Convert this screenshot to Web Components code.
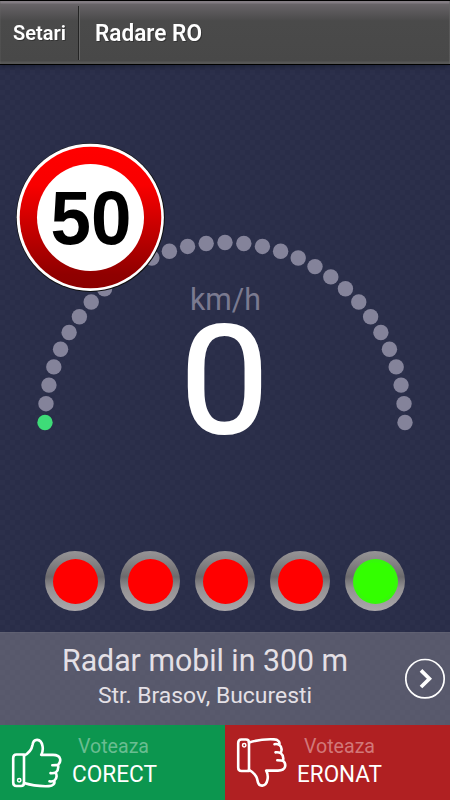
<!DOCTYPE html>
<html lang="ro"><head><meta charset="utf-8"><title>Radare RO</title>
<style>html,body{margin:0;background:#292d48}body{font-family:Roboto,"Liberation Sans",sans-serif;width:450px;height:800px;overflow:hidden}</style></head>
<body><radar-app></radar-app>
<script>
const define=(name,html)=>customElements.define(name,class extends HTMLElement{
  constructor(){super();this.attachShadow({mode:'open'});}
  connectedCallback(){const t=document.createElement('template');t.innerHTML=typeof html==='function'?html(this):html;this.shadowRoot.replaceChildren(t.content.cloneNode(true));}
});

define('fit-text',e=>`<style>:host{display:block;white-space:nowrap}svg{display:block;overflow:visible}</style>
<svg width="${e.getAttribute('w')}" height="${e.getAttribute('h')}"><text x="0" y="${e.getAttribute('h')}" textLength="${e.getAttribute('w')}" lengthAdjust="spacingAndGlyphs" fill="currentColor">${e.getAttribute('text')}</text></svg>`);

define('title-bar',`<style>
:host{display:flex;box-sizing:border-box;height:65px;border-top:1px solid #000;border-bottom:1px solid #000;background:linear-gradient(#827c82 0,#827c82 2px,#686468 3px,#625f62 6px,#4a4a4a 20px,#484848 60px,#565656 61px);color:#fff;font-weight:600;position:relative;z-index:1;box-shadow:0 1px 5px #0a0d1e88,inset 1px 0 #6664,inset -1px 0 #6668}
fit-text{filter:drop-shadow(1px 1px 0 #2228)}
.back{width:78px;box-sizing:border-box;padding:24px 0 0 13px;font-size:20.5px}
i{width:1px;height:54px;margin-top:5px;background:#242424;border-right:1px solid #666}
.title{padding:24px 0 0 15px;font-size:23px}
</style><div class="back"><fit-text text="Setari" w="53" h="15"></fit-text></div><i></i><div class="title"><fit-text text="Radare RO" w="107" h="16"></fit-text></div>`);

define('speed-sign',`<style>:host{display:block;width:150px;height:150px}svg{display:block}text{font:bold 76px "Liberation Sans",Arial,sans-serif}</style>
<svg width="150" height="150"><defs><linearGradient id="g" x1="0" y1="0" x2="0" y2="1"><stop stop-color="#f00"/><stop offset=".27" stop-color="#f90000"/><stop offset=".9" stop-color="#900000"/><stop offset="1" stop-color="#8c0000"/></linearGradient></defs>
<circle cx="75.5" cy="74.6" r="74.4" fill="#111"/><circle cx="75.3" cy="74.3" r="73.6" fill="#fff"/><circle cx="75.5" cy="74.5" r="70.8" fill="url(#g)"/><circle cx="75.5" cy="74.5" r="53.5" fill="#fff"/>
<text x="35.5" y="100.5" textLength="81" lengthAdjust="spacingAndGlyphs">50</text></svg>`);

define('speed-gauge',()=>{let s='';for(let i=0;i<=30;i++){const a=Math.PI*i/30;s+=`<circle cx="${(225-180*Math.cos(a)).toFixed(2)}" cy="${(192.5-180*Math.sin(a)).toFixed(2)}" r="7.7" fill="${i?'#84839a':'#3edc78'}"/>`;}
return `<style>:host{display:block;width:450px;height:210px}svg{display:block;overflow:visible}text{font-family:Roboto,sans-serif}</style><svg width="450" height="210">${s}
<text x="190" y="80" font-size="31" textLength="71" lengthAdjust="spacingAndGlyphs" fill="#7a7a90">km/h</text>
<text x="180" y="203" font-size="151" textLength="89" lengthAdjust="spacingAndGlyphs" fill="#fff" stroke="#fff" stroke-width="2">0</text></svg>`});

define('status-lamp',`<style>:host{display:grid;place-items:center;width:60px;height:60px;border-radius:50%;background:linear-gradient(#969496,#888688 16%,#6c6a6d 43%,#939193 62%,#aaa7aa)}
span{width:45px;height:45px;border-radius:50%;background:#f00}:host([on]) span{background:radial-gradient(circle,#3f0 0 18.5px,#36f80a 19.5px)}</style><span></span>`);

define('distance-lamps',`<style>:host{display:flex;gap:15px;padding-left:45px}</style>${'<status-lamp></status-lamp>'.repeat(4)}<status-lamp on></status-lamp>`);

define('alert-panel',`<style>:host{display:flex;box-sizing:border-box;height:93px;background:#aaa5a85c;border-top:1px solid #aaa5a818;color:#e4e0e6}
.copy{width:405px;display:flex;flex-direction:column}
.a{font-size:30.5px;margin:16px 0 0 62px}.b{font-size:22.5px;margin:15px 0 0 97.5px}
svg{display:block;margin-top:25px}</style>
<div class="copy"><fit-text class="a" text="Radar mobil in 300 m" w="286" h="22"></fit-text><fit-text class="b" text="Str. Brasov, Bucuresti" w="214" h="17"></fit-text></div>
<svg width="42" height="42" fill="none" stroke="#fff"><circle cx="20" cy="20.7" r="19.2" stroke-width="1.7"/><path d="M16 12.4l8.4 8.3-8.4 8.3" stroke-width="3.7"/></svg>`);

define('vote-button',e=>{const d=e.hasAttribute('down');return `<style>:host{display:flex;width:225px;height:75px;background:${d?'#b02022':'#0c964f'};color:#fff}svg{display:block}.c{padding-top:14px}.v{font-size:20.5px;margin-left:${d?19:18}px;color:${d?'#d27879':'#69bd91'}}.n{font-size:23px;margin:13px 0 0 11.5px}.i{width:60px}</style>
<div class="i"><svg width="62" height="75" fill="none" stroke="#fff" stroke-width="2.6" stroke-linecap="round" stroke-linejoin="round"><g transform="${d?'translate(0 75.5) scale(1 -1)':''}">
<path d="M24 29.5H16.5Q13.2 29.5 13.2 33V57.5Q13.2 61 16.5 61H21Q24 61 24 58Z"/><circle cx="19.2" cy="55.3" r="1.7" stroke-width="1.5"/>
<path d="M24 30.7C28 28.5 31.5 26 32.5 20C33.5 13 41 13 42.5 21C43.2 24.5 42.8 27 41.2 29.9H53C61.5 29.9 61.5 36.5 58 39.7Q57.2 40 52.3 40.2M58 39.7C59 44 57.5 46 55.7 47.5Q53 48.5 50.5 48.1M55.7 47.5C57.5 51.5 55.8 54.5 54.2 55.7Q52 56.8 49.5 56.3M54.2 55.7C55.3 58.5 53 61 49 61.1C42 61.4 32 60.5 24 58"/></g></svg></div>
<div class="c"><fit-text class="v" text="Voteaza" w="71" h="14"></fit-text><fit-text class="n" text="${d?'ERONAT':'CORECT'}" w="85" h="15.5"></fit-text></div>`});

define('radar-app',`<style>:host{display:block;width:450px;height:800px;background:repeating-conic-gradient(#292d48 0 25%,#2c304b 0 50%) 0 0/10px 10px}
main{height:567px;display:grid;grid-template-rows:165px 321px 81px}
speed-gauge,speed-sign{grid-area:1/1}
.road{grid-area:1/1/3/2;display:grid;align-content:start}
speed-gauge{margin-top:165px}speed-sign{margin:78px 0 0 15px;z-index:1}
distance-lamps{grid-area:3/1}.votes{display:flex}</style>
<title-bar></title-bar><main><div class="road"><speed-gauge></speed-gauge><speed-sign></speed-sign></div><distance-lamps></distance-lamps></main><alert-panel></alert-panel><div class="votes"><vote-button></vote-button><vote-button down></vote-button></div>`);
</script></body></html>
